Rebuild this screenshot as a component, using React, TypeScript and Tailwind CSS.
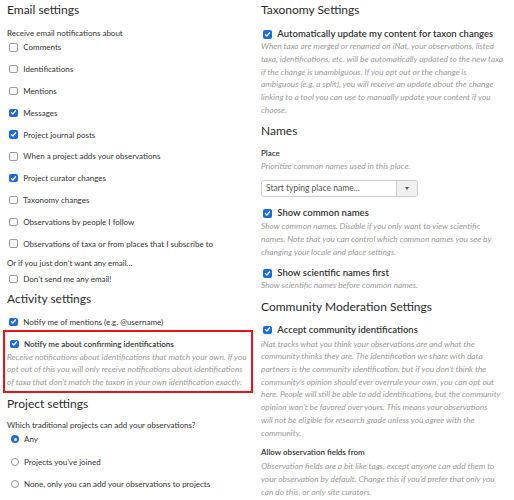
import React from "react";

function Box({ checked }: { checked?: boolean }) {
  return checked ? (
    <span className="flex h-[8.5px] w-[8.5px] shrink-0 items-center justify-center rounded-[2px] bg-[#1a6ae6]">
      <svg viewBox="0 0 10 10" className="h-[7px] w-[7px]">
        <path d="M2.2 5.4 4.2 7.3 7.9 2.5" fill="none" stroke="white" strokeWidth="1.9" strokeLinecap="round" strokeLinejoin="round" />
      </svg>
    </span>
  ) : (
    <span className="h-[8.5px] w-[8.5px] shrink-0 rounded-[2px] border border-[#9a9a9a] bg-white" />
  );
}

function Radio({ checked }: { checked?: boolean }) {
  return checked ? (
    <span className="flex h-[8px] w-[8px] shrink-0 items-center justify-center rounded-full bg-[#1a6ae6]">
      <span className="h-[3px] w-[3px] rounded-full bg-white" />
    </span>
  ) : (
    <span className="h-[8px] w-[8px] shrink-0 rounded-full border border-[#8f8f8f] bg-white" />
  );
}

function Row({ checked, label, cls, strong }: { checked?: boolean; label: string; cls: string; strong?: string }) {
  return (
    <div className={`flex h-[12px] items-center gap-[5.5px] ${cls}`}>
      <Box checked={checked} />
      <span className={`whitespace-nowrap leading-[12px] text-[#333] ${strong ?? "text-[8px]"}`}>{label}</span>
    </div>
  );
}

function RadioRow({ checked, label, cls }: { checked?: boolean; label: string; cls: string }) {
  return (
    <div className={`flex h-[12px] items-center gap-[5px] pl-[4px] ${cls}`}>
      <Radio checked={checked} />
      <span className="whitespace-nowrap text-[8px] leading-[12px] text-[#333]">{label}</span>
    </div>
  );
}

function H({ children, cls }: { children: React.ReactNode; cls: string }) {
  return <h2 className={`text-[12px] text-[#2b2b2b] ${cls}`}>{children}</h2>;
}

function Help({ lines, cls }: { lines: string[]; cls: string }) {
  return (
    <div className={`text-[8.3px] italic leading-[12.7px] text-[#9a9a9a] ${cls}`}>
      {lines.map((l, i) => (
        <div key={i} className="whitespace-nowrap">
          {l}
        </div>
      ))}
    </div>
  );
}

const RB = "text-[9.5px] font-semibold";

export default function App() {
  return (
    <div className="flex h-[500px] w-[514px] overflow-hidden bg-white font-['Lato',sans-serif]">
      <div className="ml-[7px] w-[246px] shrink-0">
        <H cls="leading-[20px]">Email settings</H>
        <p className="mt-[6.5px] text-[8px] leading-[12px] text-[#333]">Receive email notifications about</p>
        <Row label="Comments" cls="mt-[2.9px] pl-[2.3px]" />
        <Row label="Identifications" cls="mt-[9.8px] pl-[2.3px]" />
        <Row label="Mentions" cls="mt-[9.8px] pl-[2.3px]" />
        <Row checked label="Messages" cls="mt-[9.8px] pl-[2.3px]" />
        <Row checked label="Project journal posts" cls="mt-[9.8px] pl-[2.3px]" />
        <Row label="When a project adds your observations" cls="mt-[9.8px] pl-[2.3px]" />
        <Row checked label="Project curator changes" cls="mt-[9.8px] pl-[2.3px]" />
        <Row label="Taxonomy changes" cls="mt-[9.8px] pl-[2.3px]" />
        <Row label="Observations by people I follow" cls="mt-[9.8px] pl-[2.3px]" />
        <Row label="Observations of taxa or from places that I subscribe to" cls="mt-[9.8px] pl-[2.3px]" />
        <p className="mt-[7.4px] text-[8px] leading-[12px] text-[#333]">Or if you just don’t want any email…</p>
        <Row label="Don’t send me any email!" cls="mt-[4px] pl-[2.3px]" />
        <H cls="mt-[6px] leading-[16px]">Activity settings</H>
        <Row checked label="Notify me of mentions (e.g. @username)" cls="mt-[9px] pl-[2.3px]" />
        <div className="-ml-[4px] mt-[2px] h-[63px] w-[250px] border-2 border-[#e5141b] pl-[2px] pt-[6px]">
          <Row checked label="Notify me about confirming identifications" cls="pl-[3px]" strong="text-[8px] font-semibold" />
          <Help
            cls="mt-[0.7px]"
            lines={[
              "Receive notifications about identifications that match your own. If you",
              "opt out of this you will only receive notifications about identifications",
              "of taxa that don’t match the taxon in your own identification exactly.",
            ]}
          />
        </div>
        <H cls="mt-[3px] leading-[16px]">Project settings</H>
        <p className="mt-[7px] text-[8px] leading-[12px] text-[#333]">Which traditional projects can add your observations?</p>
        <RadioRow checked label="Any" cls="mt-[2.3px]" />
        <RadioRow label="Projects you’ve joined" cls="mt-[10.3px]" />
        <RadioRow label="None, only you can add your observations to projects" cls="mt-[10.3px]" />
      </div>

      <div className="ml-[8px] w-[247px] shrink-0">
        <H cls="leading-[20px]">Taxonomy Settings</H>
        <Row checked strong={RB} label="Automatically update my content for taxon changes" cls="mt-[8.3px] pl-[2.3px]" />
        <Help
          cls=""
          lines={[
            "When taxa are merged or renamed on iNat, your observations, listed",
            "taxa, identifications, etc. will be automatically updated to the new taxa",
            "if the change is unambiguous. If you opt out or the change is",
            "ambiguous (e.g. a split), you will receive an update about the change",
            "linking to a tool you can use to manually update your content if you",
            "choose.",
          ]}
        />
        <H cls="mt-[4.5px] leading-[20px]">Names</H>
        <p className="mt-[6.3px] text-[8px] font-semibold leading-[12px] text-[#333]">Place</p>
        <Help cls="mt-[1px]" lines={["Prioritize common names used in this place."]} />
        <div className="mt-[7px] flex h-[16.7px] w-[157px] overflow-hidden rounded-[3px] border border-[#ccc]">
          <div className="flex flex-1 items-center pl-[4px] text-[8.5px] text-[#555]">Start typing place name...</div>
          <div className="flex w-[21px] items-center justify-center border-l border-[#ccc] bg-[#f0f0f0]">
            <span className="h-0 w-0 border-x-[2.5px] border-t-[3px] border-x-transparent border-t-[#555]" />
          </div>
        </div>
        <Row checked strong={RB} label="Show common names" cls="mt-[10.6px] pl-[2.3px]" />
        <Help
          cls="mt-[1px]"
          lines={[
            "Show common names. Disable if you only want to view scientific",
            "names. Note that you can control which common names you see by",
            "changing your locale and place settings.",
          ]}
        />
        <Row checked strong={RB} label="Show scientific names first" cls="mt-[8.9px] pl-[2.3px]" />
        <Help cls="" lines={["Show scientific names before common names."]} />
        <H cls="mt-[4.7px] leading-[20px]">Community Moderation Settings</H>
        <Row checked strong={RB} label="Accept community identifications" cls="mt-[7.3px] pl-[2.3px]" />
        <Help
          cls="mt-[1.6px]"
          lines={[
            "iNat tracks what you think your observations are and what the",
            "community thinks they are. The identification we share with data",
            "partners is the community identification, but if you don’t think the",
            "community’s opinion should ever overrule your own, you can opt out",
            "here. People will still be able to add identifications, but the community",
            "opinion won’t be favored over yours. This means your observations",
            "will not be eligible for research grade unless you agree with the",
            "community.",
          ]}
        />
        <p className="mt-[7.1px] text-[8px] font-semibold leading-[12px] text-[#333]">Allow observation fields from</p>
        <Help
          cls="mt-[2px]"
          lines={[
            "Observation fields are a bit like tags, except anyone can add them to",
            "your observation by default. Change this if you’d prefer that only you",
            "can do this, or only site curators.",
          ]}
        />
      </div>
    </div>
  );
}
